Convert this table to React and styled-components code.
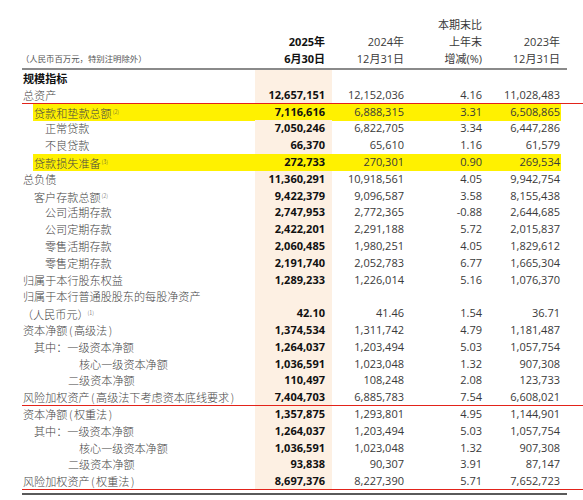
import React from 'react';
import styled, { createGlobalStyle } from 'styled-components';

const GlobalStyle = createGlobalStyle`
  body {
    margin: 0;
    background: #ffffff;
    font-family: "Noto Sans CJK SC", "Noto Sans", sans-serif;
  }
`;

const COLS = '233px 77px 78px 78px 73px';
const PAD = [7, 6, 6, 1];

const Page = styled.div`
  width: 583px;
  height: 500px;
  padding: 16px 0 0 22px;
  box-sizing: border-box;
  overflow: hidden;
`;

const Head = styled.div`
  display: grid;
  grid-template-columns: ${COLS};
  align-items: end;
  padding-bottom: 1px;
`;

const Unit = styled.div`
  font-size: 8.4px;
  line-height: 17px;
  color: #555;
  margin-left: -1px;
`;

const HeadCell = styled.div`
  text-align: right;
  padding-right: ${(p) => p.$pad}px;
  font-family: "Open Sans", "Noto Sans CJK SC", sans-serif;
  font-size: 11px;
  line-height: 17px;
  font-weight: ${(p) => (p.$bold ? 700 : 400)};
  color: ${(p) => (p.$bold ? '#111' : '#3a3a3a')};
  white-space: nowrap;
`;

const Rule = styled.div`
  width: 545px;
  height: 2px;
  background: ${(p) => p.$color};
  margin-top: ${(p) => p.$gap || 0}px;
`;

const Row = styled.div`
  display: grid;
  grid-template-columns: ${COLS};
  height: 16.8px;
  box-sizing: border-box;
  border-bottom: ${(p) => (p.$red ? '1px solid #e2231a' : 'none')};
`;

const Label = styled.div`
  margin-left: ${(p) => p.$indent}px;
  padding-left: 1px;
  font-size: 11.1px;
  line-height: 16px;
  font-weight: ${(p) => (p.$bold ? 700 : 300)};
  color: ${(p) => (p.$bold ? '#111' : '#444')};
  background: ${(p) => (p.$mark ? '#fff100' : 'transparent')};
  white-space: nowrap;
`;

const Paren = styled.span`
  margin: 0 1.5px;
`;

const Note = styled.sup`
  font-size: 5.5px;
  vertical-align: 4px;
  margin-left: ${(p) => p.$shift ?? 1}px;
  color: #444;
`;

const Value = styled.div`
  text-align: right;
  padding-right: ${(p) => p.$pad}px;
  font-family: "Open Sans", "Noto Sans", sans-serif;
  font-size: 11px;
  line-height: 16px;
  font-weight: ${(p) => (p.$bold ? 700 : 400)};
  color: ${(p) => (p.$bold ? '#111' : '#3a3a3a')};
  background: ${(p) => (p.$mark ? '#fff100' : p.$bold ? '#fdf0e3' : 'transparent')};
  white-space: nowrap;
`;

const rows = [
  { label: '规模指标', heading: true, v: ['', '', '', ''] },
  { label: '总资产', v: ['12,657,151', '12,152,036', '4.16', '11,028,483'], red: true },
  { label: '贷款和垫款总额', note: '(2)', indent: 11, v: ['7,116,616', '6,888,315', '3.31', '6,508,865'], mark: true },
  { label: '正常贷款', indent: 22, v: ['7,050,246', '6,822,705', '3.34', '6,447,286'] },
  { label: '不良贷款', indent: 22, v: ['66,370', '65,610', '1.16', '61,579'] },
  { label: '贷款损失准备', note: '(3)', indent: 11, v: ['272,733', '270,301', '0.90', '269,534'], mark: true },
  { label: '总负债', v: ['11,360,291', '10,918,561', '4.05', '9,942,754'] },
  { label: '客户存款总额', note: '(2)', indent: 11, v: ['9,422,379', '9,096,587', '3.58', '8,155,438'] },
  { label: '公司活期存款', indent: 22, v: ['2,747,953', '2,772,365', '-0.88', '2,644,685'] },
  { label: '公司定期存款', indent: 22, v: ['2,422,201', '2,291,188', '5.72', '2,015,837'] },
  { label: '零售活期存款', indent: 22, v: ['2,060,485', '1,980,251', '4.05', '1,829,612'] },
  { label: '零售定期存款', indent: 22, v: ['2,191,740', '2,052,783', '6.77', '1,665,304'] },
  { label: '归属于本行股东权益', v: ['1,289,233', '1,226,014', '5.16', '1,076,370'] },
  { label: '归属于本行普通股股东的每股净资产', v: ['', '', '', ''] },
  { label: '（人民币元）', note: '(1)', shift: -1, indent: -1, v: ['42.10', '41.46', '1.54', '36.71'] },
  { label: '资本净额', paren: '高级法', v: ['1,374,534', '1,311,742', '4.79', '1,181,487'] },
  { label: '其中：一级资本净额', indent: 11, v: ['1,264,037', '1,203,494', '5.03', '1,057,754'] },
  { label: '核心一级资本净额', indent: 56, v: ['1,036,591', '1,023,048', '1.32', '907,308'] },
  { label: '二级资本净额', indent: 45, v: ['110,497', '108,248', '2.08', '123,733'] },
  { label: '风险加权资产', paren: '高级法下考虑资本底线要求', v: ['7,404,703', '6,885,783', '7.54', '6,608,021'], red: true },
  { label: '资本净额', paren: '权重法', v: ['1,357,875', '1,293,801', '4.95', '1,144,901'] },
  { label: '其中：一级资本净额', indent: 11, v: ['1,264,037', '1,203,494', '5.03', '1,057,754'] },
  { label: '核心一级资本净额', indent: 56, v: ['1,036,591', '1,023,048', '1.32', '907,308'] },
  { label: '二级资本净额', indent: 45, v: ['93,838', '90,307', '3.91', '87,147'] },
  { label: '风险加权资产', paren: '权重法', v: ['8,697,376', '8,227,390', '5.71', '7,652,723'], red: true },
];

const headCols = [
  { lines: ['2025年', '6月30日'], bold: true },
  { lines: ['2024年', '12月31日'] },
  { lines: ['本期末比', '上年末', '增减(%)'] },
  { lines: ['2023年', '12月31日'] },
];

export default function App() {
  return (
    <Page>
      <GlobalStyle />
      <Head>
        <Unit>（人民币百万元，特别注明除外）</Unit>
        {headCols.map((c, i) => (
          <HeadCell key={i} $pad={PAD[i]} $bold={c.bold}>
            {c.lines.map((l) => (
              <div key={l}>{l}</div>
            ))}
          </HeadCell>
        ))}
      </Head>
      <Rule $color="#8a8a8a" />
      {rows.map((r, i) => (
        <Row key={i} $red={r.red}>
          <Label $indent={r.indent || 0} $bold={r.heading} $mark={r.mark}>
            {r.label}
            {r.paren && (
              <>
                <Paren>(</Paren>
                {r.paren}
                <Paren>)</Paren>
              </>
            )}
            {r.note && <Note $shift={r.shift}>{r.note}</Note>}
          </Label>
          {r.v.map((val, j) => (
            <Value key={j} $pad={PAD[j]} $bold={j === 0} $mark={r.mark}>
              {val}
            </Value>
          ))}
        </Row>
      ))}
      <Rule $color="#5a5a5a" $gap={3} />
    </Page>
  );
}
